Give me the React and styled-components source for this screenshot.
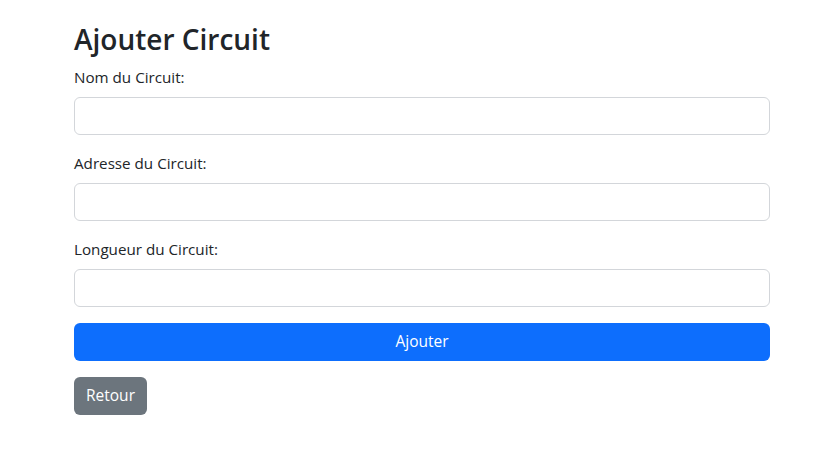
import React from "react";
import styled, { createGlobalStyle } from "styled-components";

const Global = createGlobalStyle`
  * { box-sizing: border-box; }
  body {
    margin: 0;
    background: #fff;
    color: #212529;
    font-family: "Segoe UI", "Open Sans", "Noto Sans", sans-serif;
    font-size: 16px;
    line-height: 1.5;
  }
`;

const Page = styled.div`
  padding: 23px 57px 0 74px;
`;

const Title = styled.h2`
  margin: 0 0 8px;
  font-size: 28px;
  font-weight: 600;
  line-height: 1.2;
`;

const Field = styled.div`
  margin-bottom: 16px;
`;

const Label = styled.label`
  display: block;
  margin-bottom: 8px;
  font-size: 15.2px;
  line-height: 24px;
`;

const Input = styled.input`
  display: block;
  width: 100%;
  height: 38px;
  padding: 6px 12px;
  font: inherit;
  border: 1px solid #d3d6da;
  border-radius: 6px;
  background: #fff;
  outline: none;
`;

const Button = styled.button`
  display: block;
  width: ${(p) => (p.$block ? "100%" : "auto")};
  height: 38px;
  padding: 0 12px;
  margin-bottom: 16px;
  font: inherit;
  font-size: 15.5px;
  color: #fff;
  background: ${(p) => p.$bg};
  border: none;
  border-radius: 6px;
  cursor: pointer;
`;

export default function App() {
  return (
    <>
      <Global />
      <Page>
        <Title>Ajouter Circuit</Title>
        <Field>
          <Label>Nom du Circuit:</Label>
          <Input type="text" />
        </Field>
        <Field>
          <Label>Adresse du Circuit:</Label>
          <Input type="text" />
        </Field>
        <Field>
          <Label>Longueur du Circuit:</Label>
          <Input type="text" />
        </Field>
        <Button $block $bg="#0d6efd">Ajouter</Button>
        <Button $bg="#6c757d">Retour</Button>
      </Page>
    </>
  );
}
